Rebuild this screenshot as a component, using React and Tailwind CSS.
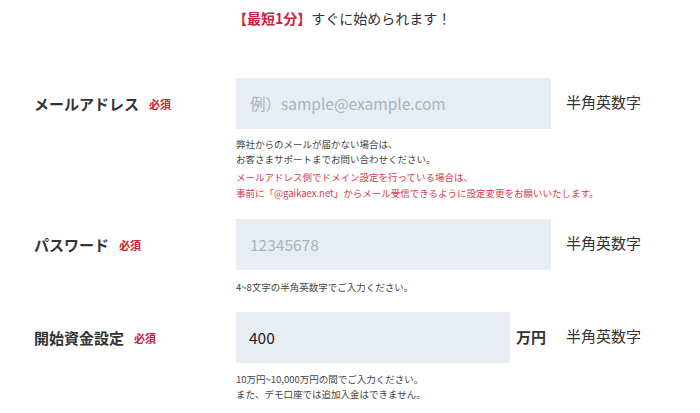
import React from "react";

const font = { fontFamily: '"Noto Sans CJK JP", "Noto Sans", sans-serif' };

function Label({ text }) {
  return (
    <div className="w-[202px] h-[51px] flex items-center shrink-0">
      <span className="text-[15px] font-bold text-[#333] leading-none">{text}</span>
      <span className="ml-[10px] text-[11px] font-bold text-[#c8233a] leading-none mt-[1px]">必須</span>
    </div>
  );
}

function Side() {
  return (
    <div className="ml-[15px] h-[51px] flex items-center pb-[4px]">
      <span className="text-[15px] text-[#333] leading-none">半角英数字</span>
    </div>
  );
}

export default function App() {
  return (
    <div className="w-[700px] h-[413px] bg-white overflow-hidden relative" style={font}>
      <div className="pt-[9px] pl-[233px] text-[14px] leading-[18px] text-[#333]">
        <span className="text-[#c8233a] font-bold">【最短1分】</span>すぐに始められます！
      </div>

      <div className="pl-[34px] mt-[51px]">
        {/* Row 1 */}
        <div className="flex">
          <Label text="メールアドレス" />
          <div className="w-[315px] shrink-0">
            <div className="h-[51px] bg-[#e7edf3] flex items-center pl-[14px]">
              <span className="text-[15.5px] text-[#a9b3bd]">例）sample@example.com</span>
            </div>
            <div className="mt-[8px] text-[9.5px] leading-[15px] text-[#444] whitespace-nowrap">
              <div>弊社からのメールが届かない場合は、</div>
              <div>お客さまサポートまでお問い合わせください。</div>
            </div>
            <div className="mt-[2px] text-[9.5px] leading-[16px] text-[#d43b4c] whitespace-nowrap">
              <div>メールアドレス側でドメイン設定を行っている場合は、</div>
              <div>事前に「@gaikaex.net」からメール受信できるように設定変更をお願いいたします。</div>
            </div>
          </div>
          <Side />
        </div>

        {/* Row 2 */}
        <div className="flex mt-[18px]">
          <Label text="パスワード" />
          <div className="w-[315px] shrink-0">
            <div className="h-[51px] bg-[#e7edf3] flex items-center pl-[14px]">
              <span className="text-[15.5px] text-[#a9b3bd]">12345678</span>
            </div>
            <div className="mt-[10px] text-[9.5px] leading-[15px] text-[#444] whitespace-nowrap">
              4~8文字の半角英数字でご入力ください。
            </div>
          </div>
          <Side />
        </div>

        {/* Row 3 */}
        <div className="flex mt-[17px]">
          <Label text="開始資金設定" />
          <div className="w-[315px] shrink-0">
            <div className="flex items-center">
              <div className="w-[274px] h-[51px] bg-[#e7edf3] flex items-center pl-[13px]">
                <span className="text-[15.5px] text-[#222]">400</span>
              </div>
              <span className="ml-[6px] text-[15px] font-bold text-[#333]">万円</span>
            </div>
            <div className="mt-[9px] text-[9.5px] leading-[15px] text-[#444] whitespace-nowrap">
              <div>10万円~10,000万円の間でご入力ください。</div>
              <div>また、デモ口座では追加入金はできません。</div>
            </div>
          </div>
          <Side />
        </div>
      </div>
    </div>
  );
}
